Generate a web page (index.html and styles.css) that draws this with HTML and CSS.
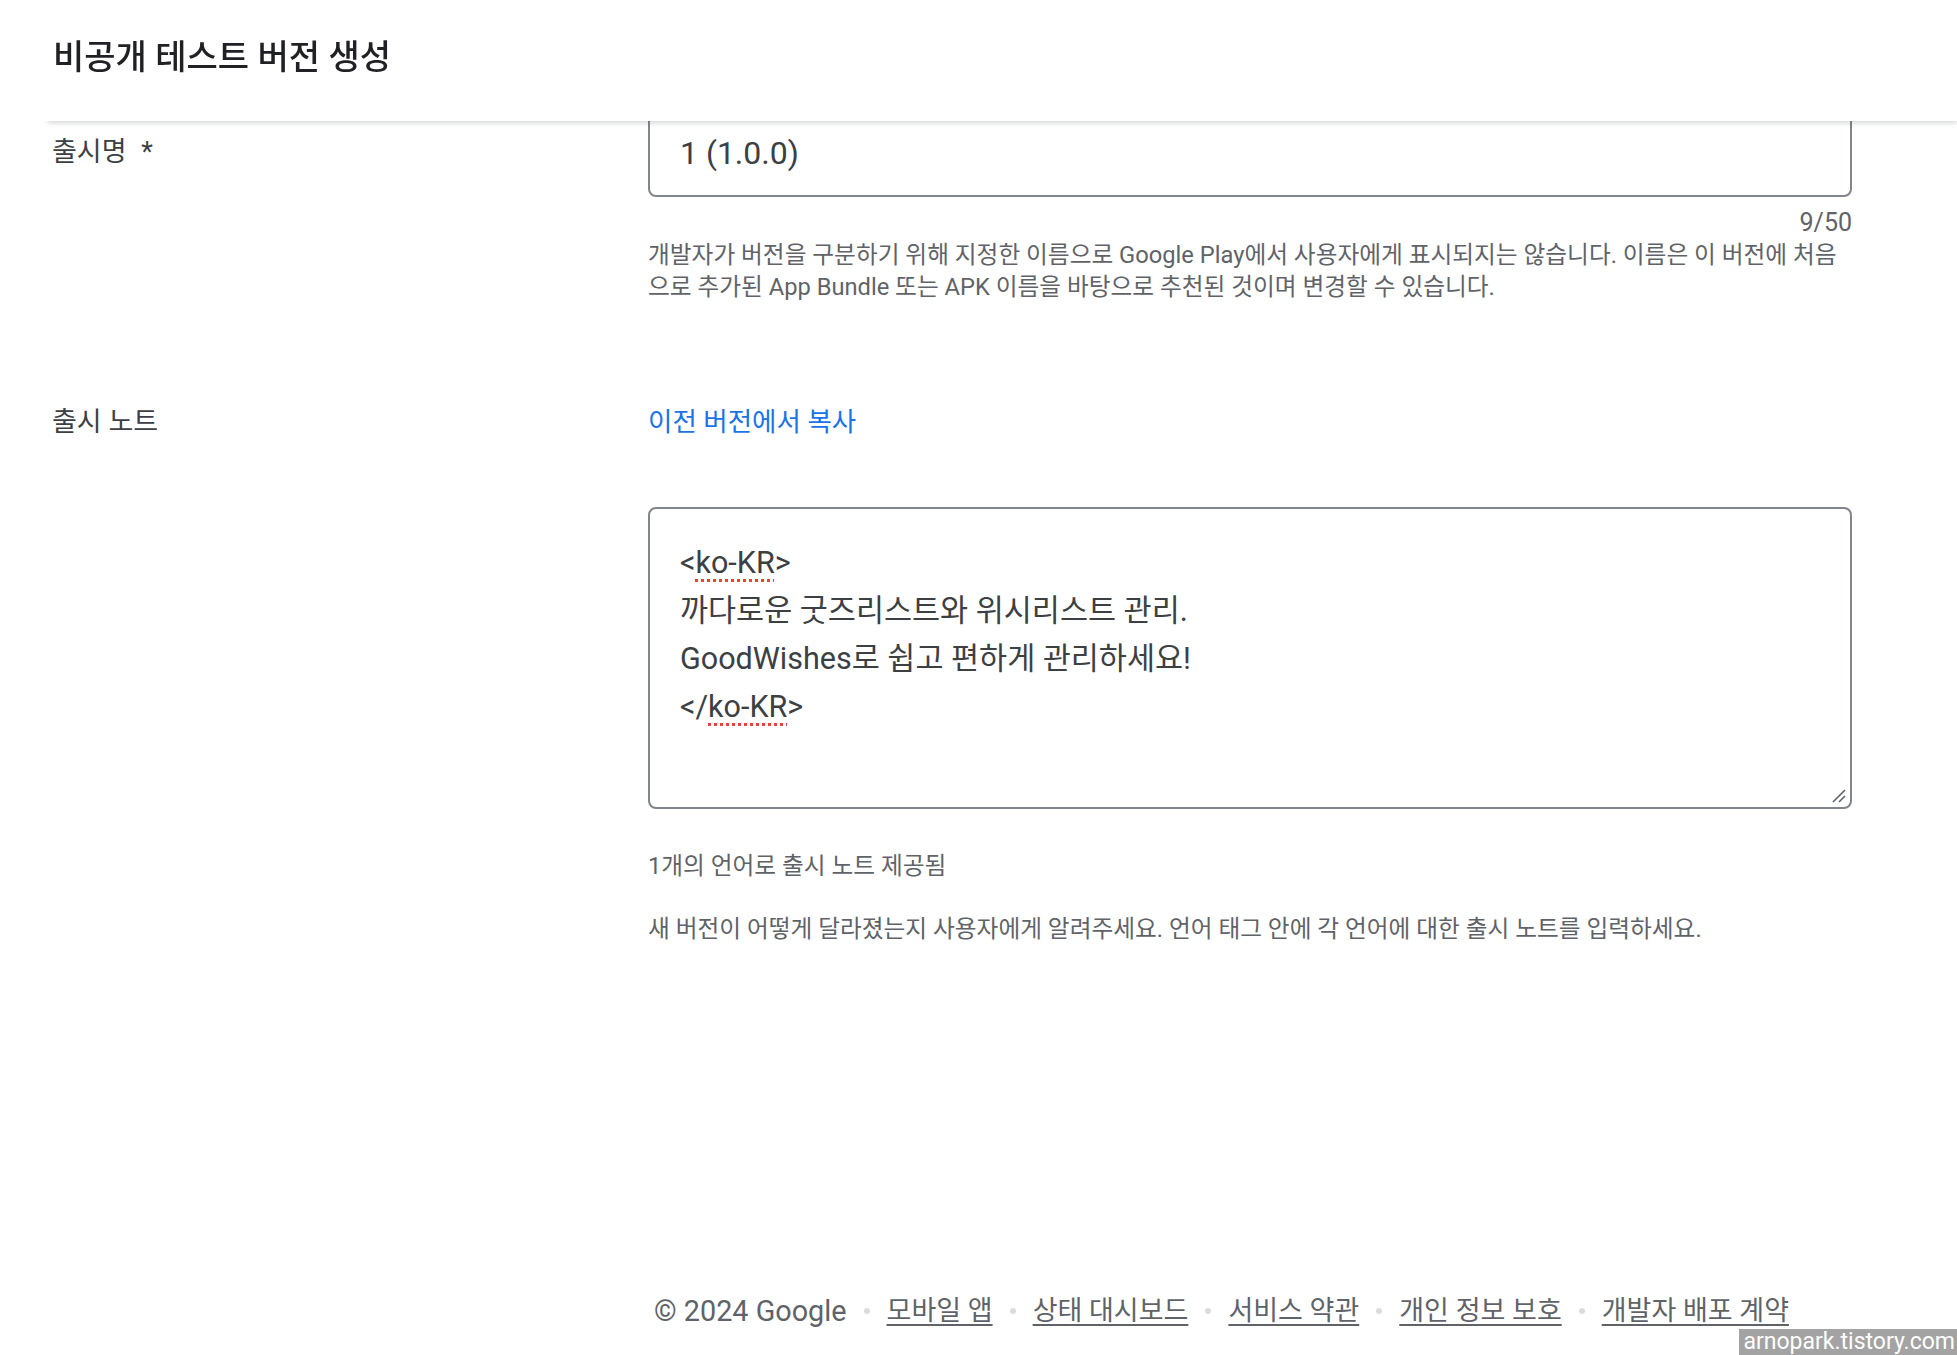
FILE: index.html
```html
<!DOCTYPE html>
<html lang="ko">
<head>
  <meta charset="UTF-8">
  <meta name="viewport" content="width=device-width, initial-scale=1.0">
  <title>비공개 테스트 버전 생성</title>
  <link rel="stylesheet" href="styles.css">
</head>
<body>
  <header class="topbar">
    <h1>비공개 테스트 버전 생성</h1>
  </header>

  <main class="form">
    <section class="row">
      <div class="row-label">출시명 <span class="req">*</span></div>
      <div class="row-field">
        <div class="text-input">1 (1.0.0)</div>
        <div class="counter">9/50</div>
        <p class="hint">개발자가 버전을 구분하기 위해 지정한 이름으로 Google Play에서 사용자에게 표시되지는 않습니다. 이름은 이 버전에 처음으로 추가된 App Bundle 또는 APK 이름을 바탕으로 추천된 것이며 변경할 수 있습니다.</p>
      </div>
    </section>

    <section class="row notes-row">
      <div class="row-label">출시 노트</div>
      <div class="row-field">
        <a class="copy-link" href="#">이전 버전에서 복사</a>
        <div class="notes-box">
          <div>&lt;<span class="misspelled">ko-KR</span>&gt;</div>
          <div>까다로운 굿즈리스트와 위시리스트 관리.</div>
          <div>GoodWishes로 쉽고 편하게 관리하세요!</div>
          <div>&lt;/<span class="misspelled">ko-KR</span>&gt;</div>
          <svg class="grip" width="16" height="16" viewBox="0 0 16 16">
            <path d="M2 14 L14 2 M8 14 L14 8" stroke="#5f6368" stroke-width="1.6" fill="none"/>
          </svg>
        </div>
        <p class="hint status">1개의 언어로 출시 노트 제공됨</p>
        <p class="hint">새 버전이 어떻게 달라졌는지 사용자에게 알려주세요. 언어 태그 안에 각 언어에 대한 출시 노트를 입력하세요.</p>
      </div>
    </section>
  </main>

  <footer class="footer">
    <span class="copyright">© 2024 Google</span>
    <span class="dot"></span>
    <a href="#">모바일 앱</a>
    <span class="dot"></span>
    <a href="#">상태 대시보드</a>
    <span class="dot"></span>
    <a href="#">서비스 약관</a>
    <span class="dot"></span>
    <a href="#">개인 정보 보호</a>
    <span class="dot"></span>
    <a href="#">개발자 배포 계약</a>
  </footer>

  <div class="watermark">arnopark.tistory.com</div>
</body>
</html>
```

FILE: styles.css
```css
body {
  margin: 0;
  font-family: Roboto, "Noto Sans CJK KR", sans-serif;
  color: #3c4043;
  background: #fff;
  min-height: 1355px;
  position: relative;
}
.topbar {
  position: fixed;
  top: 0;
  left: 48px;
  right: 0;
  height: 121px;
  background: #fff;
  box-shadow: 0 2px 5px rgba(60, 64, 67, 0.22);
  z-index: 2;
}
.topbar::before {
  content: "";
  position: absolute;
  top: 0;
  bottom: 0;
  left: -48px;
  width: 48px;
  background: #fff;
}
.topbar h1 {
  margin: 0;
  padding: 38px 0 0 5px;
  font-size: 34px;
  line-height: 38px;
  font-weight: 500;
  color: #202124;
}
.form {
  padding: 109px 0 0 52px;
}
.row {
  display: grid;
  grid-template-columns: 596px 1204px;
}
.row-label {
  margin-top: 26px;
  font-size: 27px;
  line-height: 34px;
  color: #3c4043;
}
.req {
  margin-left: 8px;
}
.text-input {
  height: 88px;
  box-sizing: border-box;
  border: 2px solid #80868b;
  border-radius: 8px;
  padding: 0 30px;
  display: flex;
  align-items: center;
  font-size: 32px;
  color: #3c4043;
}
.counter {
  margin-top: 10px;
  text-align: right;
  font-size: 25px;
  line-height: 32px;
  color: #5f6368;
}
.hint {
  margin: 0;
  font-size: 23.7px;
  line-height: 32px;
  color: #5f6368;
}
.notes-row {
  margin-top: 102px;
}
.notes-row .row-label {
  margin-top: 0;
}
.copy-link {
  display: block;
  font-size: 26.5px;
  line-height: 34px;
  color: #1a73e8;
  text-decoration: none;
}
.notes-box {
  position: relative;
  margin-top: 68px;
  height: 302px;
  box-sizing: border-box;
  border: 2px solid #80868b;
  border-radius: 8px;
  padding: 30px 30px;
  font-size: 30.5px;
  line-height: 48px;
  color: #3c4043;
}
.misspelled {
  text-decoration: underline dotted #ea4335;
  text-decoration-thickness: 3px;
  text-underline-offset: 6px;
}
.grip {
  position: absolute;
  right: 3px;
  bottom: 3px;
}
.status {
  margin-top: 41px;
}
.status + .hint {
  margin-top: 31px;
}
.footer {
  margin-top: 346px;
  padding-left: 654px;
  display: flex;
  align-items: center;
  gap: 17px;
  font-size: 27px;
  line-height: 40px;
  color: #5f6368;
}
.footer a {
  color: #5f6368;
  text-decoration: underline;
  text-underline-offset: 4px;
}
.copyright {
  font-size: 28.8px;
}
.dot {
  width: 6px;
  height: 6px;
  border-radius: 50%;
  background: #dadce0;
}
.watermark {
  position: absolute;
  right: 0;
  bottom: 0;
  padding: 0 2px 0 4px;
  background: #a3a3a3;
  color: #fff;
  font-size: 23px;
  line-height: 26px;
}
```
